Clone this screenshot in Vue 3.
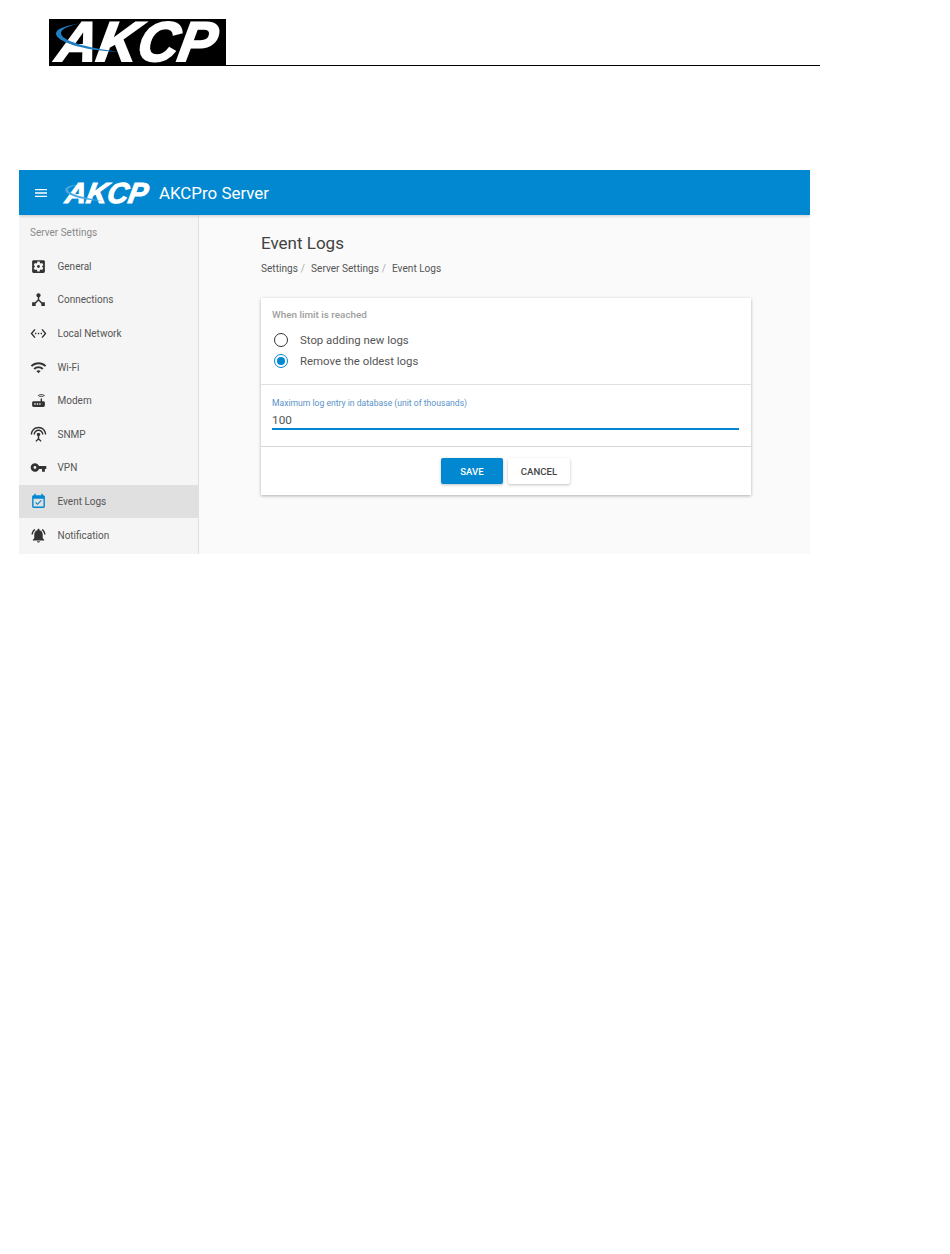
<script setup>
const items = [
  { label: 'General', d: 'M12 10c-1.1 0-2 .9-2 2s.9 2 2 2 2-.9 2-2-.9-2-2-2zm7-7H5c-1.11 0-2 .89-2 2v14c0 1.11.89 2 2 2h14c1.11 0 2-.89 2-2V5c0-1.11-.89-2-2-2zm-1.75 9c0 .23-.02.46-.05.68l1.48 1.16c.13.11.17.3.08.45l-1.4 2.42c-.09.15-.27.21-.43.15l-1.74-.7c-.36.28-.76.51-1.18.69l-.26 1.85c-.03.17-.18.3-.35.3h-2.8c-.17 0-.32-.13-.35-.29l-.26-1.85c-.43-.18-.82-.41-1.18-.69l-1.74.7c-.16.06-.34 0-.43-.15l-1.4-2.42c-.09-.15-.05-.34.08-.45l1.48-1.16c-.03-.23-.05-.46-.05-.69 0-.23.02-.46.05-.68l-1.48-1.16c-.13-.11-.17-.3-.08-.45l1.4-2.42c.09-.15.27-.21.43-.15l1.74.7c.36-.28.76-.51 1.18-.69l.26-1.85c.03-.17.18-.3.35-.3h2.8c.17 0 .32.13.35.29l.26 1.85c.43.18.82.41 1.18.69l1.74-.7c.16-.06.34 0 .43.15l1.4 2.42c.09.15.05.34-.08.45l-1.48 1.16c.03.23.05.46.05.69z' },
  { label: 'Connections', d: 'M17 16l-4-4V8.82C14.16 8.4 15 7.3 15 6c0-1.66-1.34-3-3-3S9 4.34 9 6c0 1.3.84 2.4 2 2.82V12l-4 4H3v5h5v-3.05l4-4.2 4 4.2V21h5v-5h-4z' },
  { label: 'Local Network', d: 'M7.77 6.76L6.23 5.48.82 12l5.41 6.52 1.54-1.28L3.42 12l4.35-5.24zM7 13h2v-2H7v2zm10-2h-2v2h2v-2zm-6 2h2v-2h-2v2zm6.77-7.52l-1.54 1.28L20.58 12l-4.35 5.24 1.54 1.28L23.18 12l-5.41-6.52z' },
  { label: 'Wi-Fi', d: 'M1 9l2 2c4.97-4.97 13.03-4.97 18 0l2-2C16.93 2.93 7.08 2.93 1 9zm8 8l3 3 3-3c-1.65-1.66-4.34-1.66-6 0zm-4-4l2 2c2.76-2.76 7.24-2.76 10 0l2-2C15.14 9.14 8.87 9.14 5 13z' },
  { label: 'Modem', d: 'M20.2 5.9l.8-.8C19.6 3.7 17.8 3 16 3s-3.6.7-5 2.1l.8.8C13 4.8 14.5 4.2 16 4.2s3 .6 4.2 1.7zm-.9.8c-.9-.9-2.1-1.4-3.3-1.4s-2.4.5-3.3 1.4l.8.8c.7-.7 1.6-1 2.5-1 .9 0 1.8.3 2.5 1l.8-.8zM19 13h-2V9h-2v4H5c-1.1 0-2 .9-2 2v4c0 1.1.9 2 2 2h14c1.1 0 2-.9 2-2v-4c0-1.1-.9-2-2-2zM8 18H6v-2h2v2zm3.5 0h-2v-2h2v2zm3.5 0h-2v-2h2v2z' },
  { label: 'SNMP', d: 'M12 5c-3.87 0-7 3.13-7 7h2c0-2.76 2.24-5 5-5s5 2.24 5 5h2c0-3.87-3.13-7-7-7zm1 9.29c.88-.39 1.5-1.26 1.5-2.29 0-1.38-1.12-2.5-2.5-2.5S9.5 10.62 9.5 12c0 1.02.62 1.9 1.5 2.29v3.3L7.59 21 9 22.41l3-3 3 3L16.41 21 13 17.59v-3.3zM12 1C5.93 1 1 5.93 1 12h2c0-4.97 4.03-9 9-9s9 4.03 9 9h2c0-6.07-4.93-11-11-11z' },
  { label: 'VPN', d: 'M12.65 10C11.83 7.67 9.61 6 7 6c-3.31 0-6 2.69-6 6s2.69 6 6 6c2.61 0 4.83-1.67 5.65-4H17v4h4v-4h2v-4H12.65zM7 14c-1.1 0-2-.9-2-2s.9-2 2-2 2 .9 2 2-.9 2-2 2z' },
  { label: 'Event Logs', active: true, d: 'M16.53 11.06L15.47 10l-4.88 4.88-2.12-2.12-1.06 1.06L10.59 17l5.94-5.94zM19 3h-1V1h-2v2H8V1H6v2H5c-1.11 0-1.99.9-1.99 2L3 19c0 1.1.89 2 2 2h14c1.1 0 2-.9 2-2V5c0-1.1-.9-2-2-2zm0 16H5V8h14v11z' },
  { label: 'Notification', d: 'M7.58 4.08L6.15 2.65C3.75 4.48 2.17 7.3 2.03 10.5h2c.15-2.65 1.51-4.97 3.55-6.42zm12.39 6.42h2c-.15-3.2-1.73-6.02-4.12-7.85l-1.42 1.43c2.02 1.45 3.39 3.77 3.54 6.42zM18 11c0-3.07-1.64-5.64-4.5-6.32V4c0-.83-.67-1.5-1.5-1.5s-1.5.67-1.5 1.5v.68C7.63 5.36 6 7.92 6 11v5l-2 2v1h16v-1l-2-2v-5zm-6 11c.14 0 .27-.01.4-.04.65-.14 1.18-.58 1.44-1.18.1-.24.15-.5.15-.78h-4c.01 1.1.9 2 2.01 2z' },
]
</script>

<template>
  <div class="page">
    <div class="doc-head">
      <div class="doc-logo">
        <span class="doc-logo-text">AKCP</span>
        <svg class="doc-swoosh" viewBox="0 0 80 32" width="80" height="32">
          <path d="M27 1C12 3 1 6 0 11c-1 7 20 17 64 19C32 26 5 19 5 11 5 7 14 3 27 1z" fill="#1f7fc4" />
        </svg>
      </div>
    </div>

    <div class="app">
      <header class="bar">
        <svg class="menu" viewBox="0 0 24 24" width="16" height="16"><path d="M3 18h18v-2H3v2zm0-5h18v-2H3v2zm0-7v2h18V6H3z" fill="#fff" /></svg>
        <div class="bar-logo">
          <span class="bar-logo-text">AKCP</span>
          <svg class="bar-swoosh" viewBox="0 0 40 20" width="40" height="20">
            <path d="M14 1C6 2 0 4 0 7c0 4 14 10 38 11C20 15 4 11 3 7 3 5 8 3 14 1z" fill="#4aa6e0" />
          </svg>
        </div>
        <span class="bar-title">AKCPro Server</span>
      </header>

      <div class="body">
        <nav class="side">
          <div class="side-title">Server Settings</div>
          <div v-for="item in items" :key="item.label" class="side-item" :class="{ active: item.active }">
            <svg viewBox="0 0 24 24" width="17" height="17"><path :d="item.d" /></svg>
            <span>{{ item.label }}</span>
          </div>
        </nav>

        <main class="main">
          <h1>Event Logs</h1>
          <div class="crumbs">
            <span>Settings</span><i>/</i><span>Server Settings</span><i>/</i><span>Event Logs</span>
          </div>

          <section class="card">
            <div class="sec-limit">
              <div class="sec-title">When limit is reached</div>
              <label class="radio"><b class="dot"></b>Stop adding new logs</label>
              <label class="radio on"><b class="dot"></b>Remove the oldest logs</label>
            </div>
            <div class="sec-field">
              <div class="field-label">Maximum log entry in database (unit of thousands)</div>
              <div class="field-value">100</div>
            </div>
            <div class="sec-actions">
              <button class="btn primary">SAVE</button>
              <button class="btn">CANCEL</button>
            </div>
          </section>
        </main>
      </div>
    </div>
  </div>
</template>

<style>
html, body { margin: 0; background: #fff; }
</style>

<style scoped>
.page {
  width: 950px;
  height: 1254px;
  overflow: hidden;
  font-family: Roboto, "Liberation Sans", sans-serif;
  padding-top: 19px;
  box-sizing: border-box;
}
.doc-head {
  margin-left: 49px;
  width: 771px;
  height: 47px;
  border-bottom: 1px solid #000;
  box-sizing: border-box;
}
.doc-logo {
  position: relative;
  width: 177px;
  height: 46px;
  background: #000;
}
.doc-logo-text {
  position: absolute;
  left: 9px;
  top: 0;
  font: italic 700 56px/46px "Liberation Sans", sans-serif;
  color: #fff;
  -webkit-text-stroke: 2px #fff;
  transform: skewX(-10deg);
}
.doc-swoosh { position: absolute; left: 7px; top: 3px; }

.app {
  margin: 104px 0 0 19px;
  width: 791px;
  height: 384px;
  display: flex;
  flex-direction: column;
  overflow: hidden;
  background: #fafafa;
}
.bar {
  height: 45px;
  flex: none;
  background: #0288d1;
  display: flex;
  align-items: center;
  padding-left: 14px;
  box-shadow: 0 1px 3px rgba(0, 0, 0, .2);
  position: relative;
  z-index: 1;
}
.menu { margin-right: 15px; }
.bar-logo {
  position: relative;
  width: 87px;
  height: 24px;
  margin-right: 8px;
}
.bar-logo-text {
  position: absolute;
  left: 2px;
  top: -2px;
  font: italic 700 29px/28px "Liberation Sans", sans-serif;
  color: #fff;
  -webkit-text-stroke: 1px #fff;
  transform: skewX(-10deg);
}
.bar-swoosh { position: absolute; left: 1px; top: 2px; }
.bar-title { color: #fff; font-size: 16.9px; }

.body { flex: 1; display: flex; min-height: 0; }
.side {
  width: 179px;
  flex: none;
  background: #f5f5f5;
  border-right: 1px solid #e0e0e0;
}
.side-title {
  height: 34.6px;
  padding: 0 0 0 11px;
  line-height: 35px;
  font-size: 10px;
  color: #8a8a8a;
}
.side-item {
  height: 33.6px;
  display: flex;
  align-items: center;
  padding-left: 11px;
  font-size: 10px;
  color: #555;
}
.side-item svg { fill: #333; margin-right: 10.5px; flex: none; }
.side-item.active { background: #e0e0e0; }
.side-item.active svg { fill: #0288d1; }

.main { flex: 1; padding-left: 62px; min-width: 0; }
h1 {
  margin: 18px 0 0;
  font-size: 17px;
  line-height: 20px;
  font-weight: 400;
  color: #424242;
}
.crumbs {
  margin-top: 9px;
  font-size: 10.1px;
  line-height: 14px;
  color: #555;
  display: flex;
}
.crumbs i { font-style: normal; color: #aaa; margin: 0 6px 0 3px; }
.card {
  margin-top: 22px;
  width: 490px;
  height: 197px;
  background: #fff;
  box-shadow: 0 1px 3px rgba(0, 0, 0, .3);
  display: flex;
  flex-direction: column;
}
.sec-limit {
  height: 87px;
  flex: none;
  box-sizing: border-box;
  border-bottom: 1px solid #e0e0e0;
  padding: 11px 11px 0;
}
.sec-title {
  font-size: 9.9px;
  font-weight: 500;
  line-height: 12px;
  color: #9e9e9e;
  margin-bottom: 8px;
}
.radio {
  display: flex;
  align-items: center;
  height: 21px;
  font-size: 11.4px;
  color: #555;
}
.dot {
  width: 14px;
  height: 14px;
  box-sizing: border-box;
  border: 1.6px solid #333;
  border-radius: 50%;
  margin: 0 12px 0 2px;
  position: relative;
}
.radio.on .dot { border-color: #0288d1; }
.radio.on .dot::after {
  content: "";
  position: absolute;
  inset: 2px;
  border-radius: 50%;
  background: #0288d1;
}
.sec-field {
  height: 62px;
  flex: none;
  box-sizing: border-box;
  border-bottom: 1px solid #d6d6d6;
  padding: 13px 12px 0 11px;
}
.field-label {
  font-size: 8.6px;
  line-height: 11px;
  color: #5a93c9;
}
.field-value {
  margin-top: 3px;
  line-height: 16px;
  font-size: 11.8px;
  color: #555;
  border-bottom: 2px solid #0288d1;
  height: 16px;
}
.sec-actions {
  flex: 1;
  display: flex;
  justify-content: center;
  align-items: center;
  gap: 5px;
  padding-right: 1px;
}
.btn {
  width: 62px;
  height: 26px;
  padding: 0;
  border: 0;
  border-radius: 2px;
  background: #fff;
  color: #444;
  font: 500 9.6px Roboto, sans-serif;
  box-shadow: 0 1px 3px rgba(0, 0, 0, .25);
}
.btn.primary { background: #0288d1; color: #fff; }
</style>
